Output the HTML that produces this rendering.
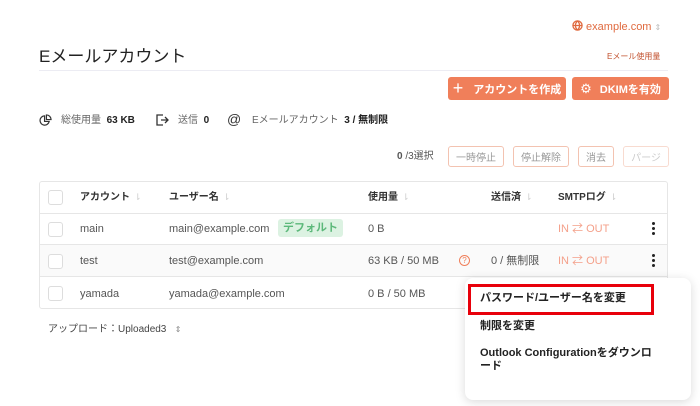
<!DOCTYPE html><html><head><meta charset="utf-8"><style>
*{box-sizing:border-box;margin:0;padding:0}
body{width:700px;height:406px;background:#fff;font-family:"Liberation Sans","Noto Sans CJK JP",sans-serif;color:#333;position:relative;overflow:hidden;font-size:11px}
.a{position:absolute;white-space:nowrap;line-height:14px}
.ob{position:absolute;background:#f07f5a;color:#fff;border-radius:3px;font-weight:bold;font-size:11px;display:flex;align-items:center;justify-content:center;height:23px;top:77px}
.lb{position:absolute;top:146px;height:21px;border:1px solid #f3c3b1;border-radius:3px;color:#999;font-size:10px;display:flex;align-items:center;justify-content:center}
.tbl{position:absolute;left:39px;top:181px;width:629px;height:128px;border:1px solid #e6e6e6;border-radius:3px}
.row{position:absolute;left:0;width:627px;border-top:1px solid #e6e6e6}
.cb{position:absolute;left:8px;width:15px;height:15px;border:1px solid #ddd;border-radius:3px;background:#fff}
.c{position:absolute;font-size:11px;color:#555;white-space:nowrap;line-height:14px}
.h{font-weight:bold;color:#333;font-size:10px}
.s{color:#ccc;font-size:9px;margin-left:4px;font-weight:normal}
.io{color:#f4a08a}
.keb{position:absolute;width:3px}
.keb i{display:block;width:3px;height:3px;background:#222;border-radius:50%;margin-bottom:2px}
</style></head><body>
<div class="a" style="left:572px;top:20px;color:#e06a3f;font-size:11px"><svg width="11" height="11" viewBox="0 0 12 12" style="vertical-align:-1px" fill="none" stroke="#e06a3f" stroke-width="1.4"><circle cx="6" cy="6" r="5"/><path d="M1 6h10M6 1c-3 3-3 7 0 10M6 1c3 3 3 7 0 10"/></svg> example.com <span style="color:#bbb;font-size:8px">⇕</span></div>
<div class="a" style="left:39px;top:47px;font-size:17px;color:#222;line-height:20px">Eメールアカウント</div>
<div class="a" style="left:607px;top:50px;font-size:8px;color:#c2512e">Eメール使用量</div>
<div class="a" style="left:39px;top:70px;width:629px;height:1px;background:#ececf3"></div>
<div class="ob" style="left:448px;width:118px"><span style="font-size:18px;font-weight:normal;margin-right:10px">+</span>アカウントを作成</div>
<div class="ob" style="left:572px;width:97px"><span style="font-size:13px;font-weight:normal;margin-right:8px">⚙</span>DKIMを有効</div>
<svg class="a" style="left:39px;top:114px" width="13" height="13" viewBox="0 0 14 14" fill="none" stroke="#333" stroke-width="1.3"><path d="M6 2a5 5 0 1 0 5 6H6z"/><path d="M8 1v5h5a5 5 0 0 0-5-5z"/></svg>
<div class="a" style="left:61px;top:114px;font-size:10px;color:#666">総使用量 &nbsp;<b style="color:#222">63 KB</b></div>
<svg class="a" style="left:155px;top:113px" width="14" height="14" viewBox="0 0 14 14" fill="none" stroke="#333" stroke-width="1.3"><path d="M8 2H2v10h6M6 7h7M10 4l3 3-3 3"/></svg>
<div class="a" style="left:178px;top:114px;font-size:10px;color:#666">送信 &nbsp;<b style="color:#222">0</b></div>
<div class="a" style="left:227px;top:112px;font-size:14px;color:#333">@</div>
<div class="a" style="left:252px;top:114px;font-size:10px;color:#666">Eメールアカウント &nbsp;<b style="color:#222">3 / 無制限</b></div>
<div class="a" style="left:397px;top:150px;font-size:10px;color:#555"><b>0</b> /3選択</div>
<div class="lb" style="left:448px;width:56px">一時停止</div>
<div class="lb" style="left:513px;width:56px">停止解除</div>
<div class="lb" style="left:578px;width:36px">消去</div>
<div class="lb" style="left:623px;width:46px;color:#ccc;border-color:#f8dbd0">パージ</div>
<div class="tbl">
<div class="cb" style="top:8px"></div>
<div class="c h" style="left:40px;top:8px">アカウント<span class="s">⇂</span></div>
<div class="c h" style="left:129px;top:8px">ユーザー名<span class="s">⇂</span></div>
<div class="c h" style="left:328px;top:8px">使用量<span class="s">⇂</span></div>
<div class="c h" style="left:451px;top:8px">送信済<span class="s">⇂</span></div>
<div class="c h" style="left:518px;top:8px">SMTPログ<span class="s">⇂</span></div>
<div class="row" style="top:31px;height:31px">
<div class="cb" style="top:8px"></div><div class="c" style="left:40px;top:8px">main</div><div class="c" style="left:129px;top:8px">main@example.com</div>
<div class="c" style="left:238px;top:5px;background:#dcf2e2;color:#5cb87a;padding:2px 5px;border-radius:3px;font-weight:bold">デフォルト</div>
<div class="c" style="left:328px;top:8px">0 B</div><div class="c io" style="left:518px;top:8px">IN ⇄ OUT</div>
<div class="keb" style="left:612px;top:8px"><i></i><i></i><i></i></div></div>
<div class="row" style="top:62px;height:32px;background:#fafafa">
<div class="cb" style="top:9px"></div><div class="c" style="left:40px;top:9px">test</div><div class="c" style="left:129px;top:9px">test@example.com</div>
<div class="c" style="left:328px;top:9px">63 KB / 50 MB</div>
<div class="c" style="left:419px;top:10px;width:11px;height:11px;border:1px solid #f07f5a;border-radius:50%;color:#f07f5a;font-size:8px;text-align:center;line-height:9px">?</div>
<div class="c" style="left:451px;top:9px">0 / 無制限</div><div class="c io" style="left:518px;top:9px">IN ⇄ OUT</div>
<div class="keb" style="left:612px;top:9px"><i></i><i></i><i></i></div></div>
<div class="row" style="top:94px;height:33px">
<div class="cb" style="top:9px"></div><div class="c" style="left:40px;top:10px">yamada</div><div class="c" style="left:129px;top:10px">yamada@example.com</div><div class="c" style="left:328px;top:10px">0 B / 50 MB</div></div>
</div>
<div class="a" style="left:48px;top:323px;font-size:10px;color:#444">アップロード：Uploaded3 &nbsp;&nbsp;<span style="color:#888;font-size:8px">⇕</span></div>
<div class="a" style="left:465px;top:278px;width:226px;height:122px;background:#fff;border-radius:8px;box-shadow:0 2px 10px rgba(0,0,0,.15)"></div>
<div class="a" style="left:468px;top:284px;width:186px;height:31px;border:3px solid #e8000b"></div>
<div class="a" style="left:480px;top:291px;font-size:11px;font-weight:bold;color:#222">パスワード/ユーザー名を変更</div>
<div class="a" style="left:480px;top:319px;font-size:11px;font-weight:bold;color:#222">制限を変更</div>
<div class="a" style="left:480px;top:347px;font-size:11px;font-weight:bold;color:#222;line-height:13px">Outlook Configurationをダウンロ<br>ード</div>
</body></html>
